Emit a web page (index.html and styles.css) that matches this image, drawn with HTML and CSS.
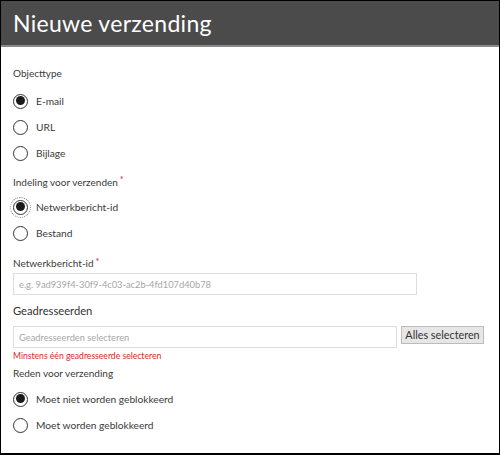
FILE: index.html
```html
<!DOCTYPE html>
<html lang="nl">
<head>
<meta charset="utf-8">
<title>Nieuwe verzending</title>
<link rel="stylesheet" href="styles.css">
</head>
<body>
<div class="frame">
  <header class="header">Nieuwe verzending</header>
  <main class="content">
    <div class="label label-first">Objecttype</div>
    <div class="group">
      <label class="radio-row"><span class="radio checked"></span><span class="radio-text">E-mail</span></label>
      <label class="radio-row"><span class="radio"></span><span class="radio-text">URL</span></label>
      <label class="radio-row"><span class="radio"></span><span class="radio-text">Bijlage</span></label>
    </div>
    <div class="label label-mid">Indeling voor verzenden<span class="req">*</span></div>
    <div class="group group-tight">
      <label class="radio-row"><span class="radio checked focused"></span><span class="radio-text">Netwerkbericht-id</span></label>
      <label class="radio-row"><span class="radio"></span><span class="radio-text">Bestand</span></label>
    </div>
    <div class="label label-field">Netwerkbericht-id<span class="req">*</span></div>
    <input class="text-input wide" type="text" placeholder="e.g. 9ad939f4-30f9-4c03-ac2b-4fd107d40b78">
    <div class="section-title">Geadresseerden</div>
    <div class="picker-row">
      <input class="text-input picker" type="text" placeholder="Geadresseerden selecteren">
      <button class="btn" type="button">Alles selecteren</button>
    </div>
    <div class="error">Minstens één geadresseerde selecteren</div>
    <div class="label label-reason">Reden voor verzending</div>
    <div class="group group-reason">
      <label class="radio-row"><span class="radio checked"></span><span class="radio-text">Moet niet worden geblokkeerd</span></label>
      <label class="radio-row"><span class="radio"></span><span class="radio-text">Moet worden geblokkeerd</span></label>
    </div>
  </main>
</div>
</body>
</html>
```
FILE: styles.css
```css
* { box-sizing: border-box; }
html, body { margin: 0; padding: 0; background: #fff; }
body {
  font-family: Lato, "Open Sans", "Liberation Sans", sans-serif;
  color: #333;
}
.frame {
  width: 500px;
  height: 455px;
  border: 1px solid #000;
  border-bottom-width: 2px;
  overflow: hidden;
  display: flex;
  flex-direction: column;
}
.header {
  height: 46px;
  flex: none;
  background: #4b4b4b;
  border-bottom: 2px solid #8a8a8a;
  color: #fff;
  font-size: 23px;
  line-height: 44px;
  padding-left: 12px;
  letter-spacing: 0.3px;
}
.content {
  padding: 0 12px;
  display: flex;
  flex-direction: column;
}
.label {
  font-size: 10px;
  line-height: 20px;
  height: 20px;
  color: #3a3a3a;
}
.label-first { margin-top: 16px; }
.label-mid { margin-top: 6px; }
.label-field { margin-top: 8px; height: 18px; line-height: 18px; }
.label-reason { margin-top: 0; }
.req { color: #c4262e; margin-left: 2px; font-size: 9px; vertical-align: top; line-height: 16px; }
.group { margin-top: 5px; display: flex; flex-direction: column; }
.group-tight { margin-top: 2px; }
.group-reason { margin-top: 3px; }
.radio-row {
  height: 26px;
  display: flex;
  align-items: center;
  gap: 8px;
  font-size: 10.2px;
}
.radio {
  position: relative;
  width: 15px;
  height: 15px;
  border: 1.5px solid #333;
  border-radius: 50%;
  flex: none;
}
.radio.checked::after {
  content: "";
  position: absolute;
  left: 1.5px;
  top: 1.5px;
  width: 9px;
  height: 9px;
  border-radius: 50%;
  background: #1a1a1a;
}
.radio.focused { outline: 1px dotted #777; outline-offset: 2px; }
.radio-text { color: #3a3a3a; }
.text-input {
  height: 22px;
  border: 1px solid #ddd;
  font-family: inherit;
  font-size: 9.3px;
  padding: 0 5px;
  color: #333;
  outline: none;
}
.text-input::placeholder { color: #a6a6a6; }
.wide { width: 404px; margin-top: 1px; }
.section-title {
  margin-top: 6px;
  font-size: 11.2px;
  line-height: 20px;
  height: 20px;
  color: #333;
}
.picker-row { margin-top: 5px; display: flex; align-items: flex-start; gap: 4px; }
.picker { width: 384px; flex: none; }
.btn {
  flex: none;
  white-space: nowrap;
  height: 18px;
  width: 83px;
  padding: 0;
  background: #e6e6e6;
  border: 1px solid #bcbcbc;
  font-family: inherit;
  font-size: 10.8px;
  color: #333;
  line-height: 16px;
  border-radius: 0;
}
.error {
  font-size: 8.6px;
  line-height: 14px;
  height: 14px;
  color: #d9262c;
  margin-top: 1px;
}
```
